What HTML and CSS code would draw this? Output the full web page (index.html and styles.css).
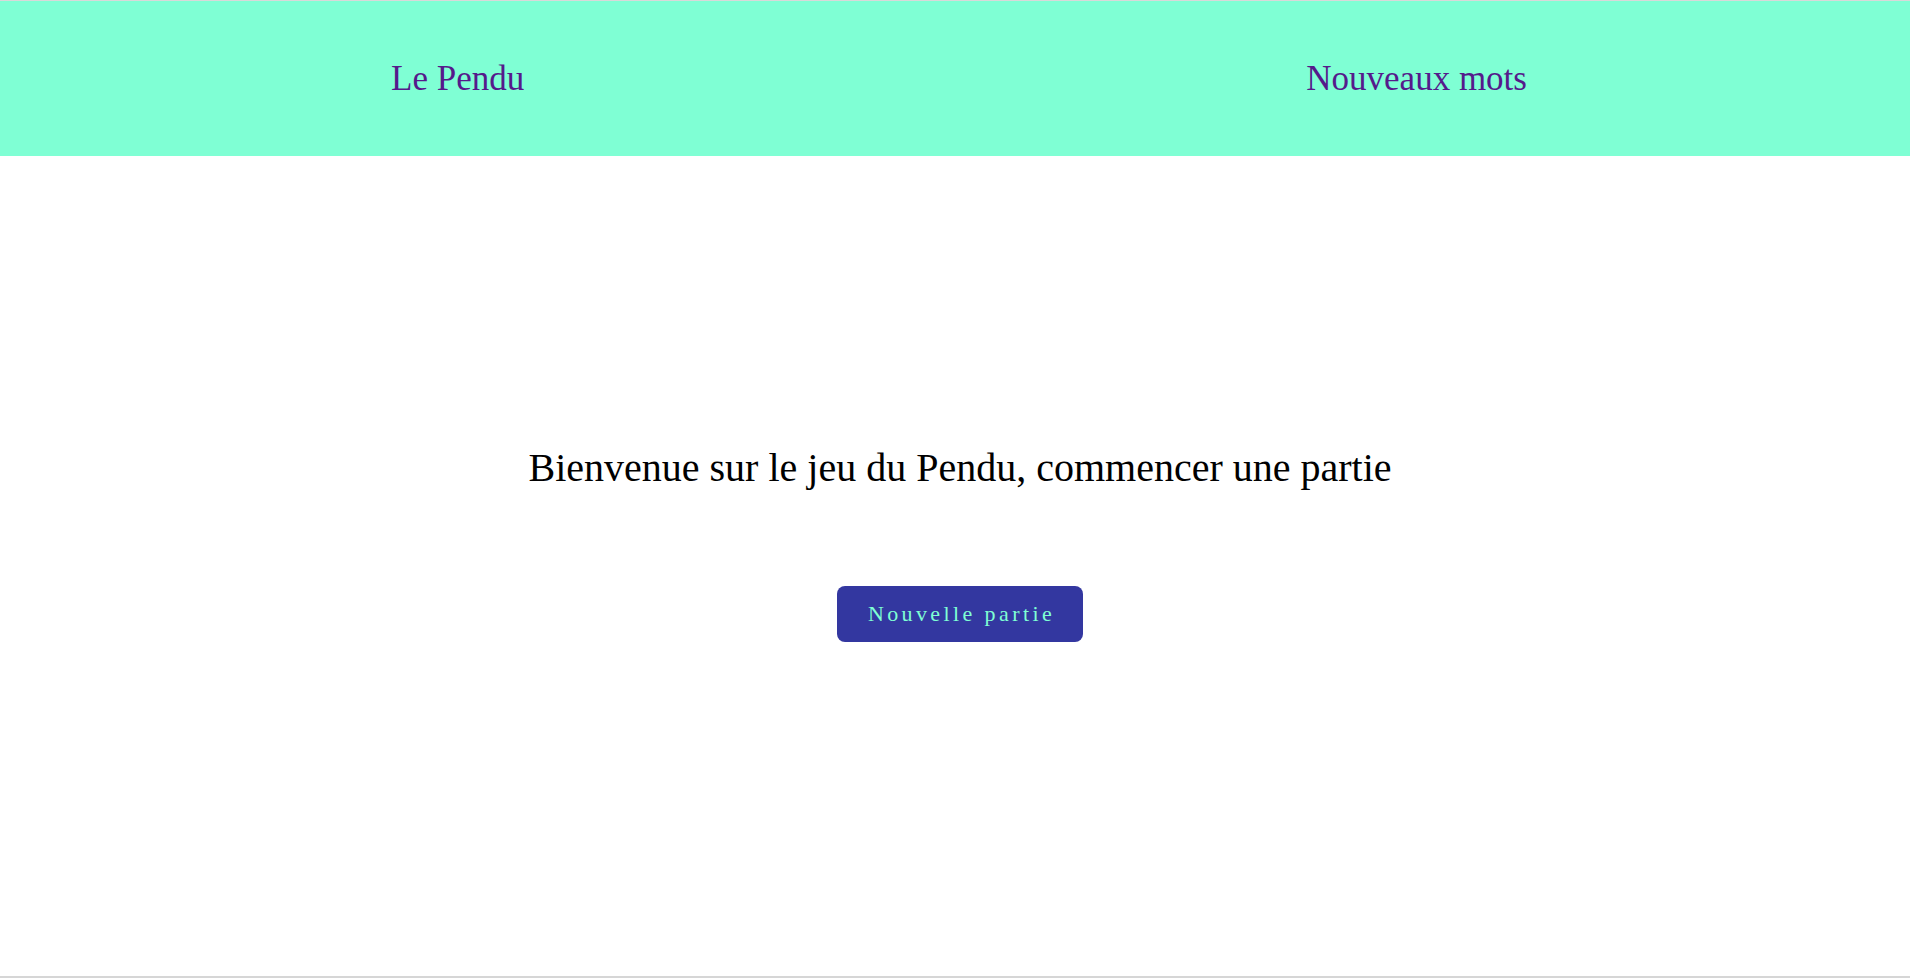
FILE: index.html
```html
<!DOCTYPE html>
<html lang="fr">
<head>
<meta charset="utf-8">
<title>Le Pendu</title>
<link rel="stylesheet" href="styles.css">
</head>
<body>
<div class="page">
  <header class="topbar">
    <a class="nav-link" href="#">Le Pendu</a>
    <a class="nav-link" href="#">Nouveaux mots</a>
  </header>
  <main class="home">
    <p class="welcome">Bienvenue sur le jeu du Pendu, commencer une partie</p>
    <button class="start-btn" type="button">Nouvelle partie</button>
  </main>
</div>
</body>
</html>
```

FILE: styles.css
```css
html, body {
  margin: 0;
  padding: 0;
  background: #ffffff;
}

body {
  font-family: "Liberation Serif", "Times New Roman", serif;
}

.page {
  height: 978px;
  box-sizing: border-box;
  border-top: 1px solid #d9d9d9;
  border-bottom: 2px solid #d6d6d6;
  display: flex;
  flex-direction: column;
}

.topbar {
  height: 155px;
  background: #7fffd4;
  display: flex;
  align-items: center;
  justify-content: space-around;
  padding-left: 8px;
}

.nav-link {
  font-size: 35px;
  color: #551a8b;
  text-decoration: none;
}

.nav-link + .nav-link {
  margin-left: 16px;
}

.home {
  display: flex;
  flex-direction: column;
  align-items: center;
  padding-top: 288px;
  padding-left: 10px;
}

.welcome {
  margin: 0;
  font-size: 40px;
  color: #000000;
}

.start-btn {
  margin-top: 95px;
  width: 246px;
  height: 56px;
  border: none;
  border-radius: 8px;
  background: #3337a0;
  color: #7fffd4;
  font-family: "Liberation Serif", "Times New Roman", serif;
  font-size: 22px;
  letter-spacing: 3.4px;
  padding: 0 0 0 3px;
  cursor: pointer;
}
```
